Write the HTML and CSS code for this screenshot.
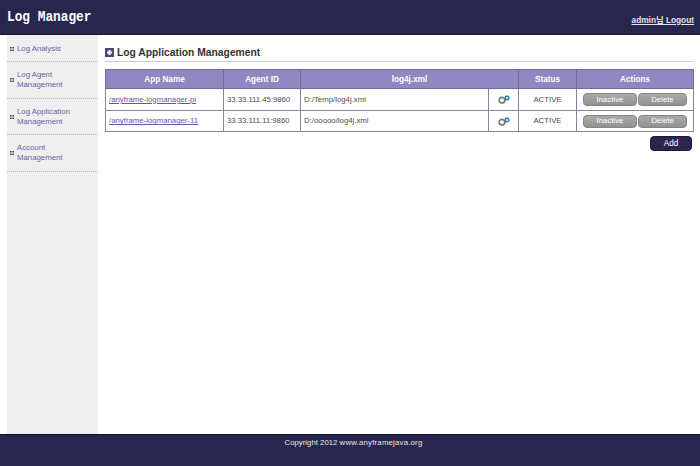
FILE: index.html
```html
<!DOCTYPE html>
<html lang="en">
<head>
<meta charset="utf-8">
<title>Log Manager</title>
<link rel="stylesheet" href="styles.css">
</head>
<body>
<svg class="defs" width="0" height="0">
  <symbol id="dots" viewBox="0 0 4 4"><path d="M0 0h1.6v1.6H0zM2.4 0H4v1.6H2.4zM0 2.4h1.6V4H0zM2.4 2.4H4V4H2.4z" fill="#454168"/></symbol>
  <symbol id="gears" viewBox="0 0 12 9"><circle cx="4" cy="5.2" r="2.7" fill="none" stroke="#777" stroke-width="1.6"/><circle cx="4" cy="5.2" r="3.6" fill="none" stroke="#888" stroke-width=".7" stroke-dasharray="1.2 1.6"/><circle cx="9" cy="3" r="1.7" fill="none" stroke="#2587ab" stroke-width="1.5"/><circle cx="9" cy="3" r="2.5" fill="none" stroke="#3b8dae" stroke-width=".5" stroke-dasharray="1 1"/></symbol>
</svg>
<header class="header">
  <h1 class="brand">Log Manager</h1>
  <a class="logout">admin님 Logout</a>
</header>
<div class="body">
  <nav class="sidebar">
    <a class="item first"><svg class="dots"><use href="#dots"/></svg><span>Log Analysis</span></a>
    <a class="item"><svg class="dots"><use href="#dots"/></svg><span>Log Agent<br>Management</span></a>
    <a class="item"><svg class="dots"><use href="#dots"/></svg><span>Log Application<br>Management</span></a>
    <a class="item"><svg class="dots"><use href="#dots"/></svg><span>Account<br>Management</span></a>
  </nav>
  <main class="main">
    <div class="title">
      <svg class="plus" viewBox="0 0 9 9"><path d="M0 0h9v9H0z" fill="#4c4878"/><path d="M3.5 2h2v1.5H7v2H5.5V7h-2V5.5H2v-2h1.5z" fill="#fff"/></svg>
      <h2>Log Application Management</h2>
    </div>
    <table class="apps">
      <colgroup><col class="c-name"><col class="c-agent"><col class="c-xml"><col class="c-gear"><col class="c-status"><col class="c-act"></colgroup>
      <tr><th>App Name</th><th>Agent ID</th><th class="xml" colspan="2">log4j.xml</th><th>Status</th><th>Actions</th></tr>
      <tr><td><a class="link">/anyframe-logmanager-pi</a></td><td class="agent">33.33.111.45:9860</td><td>D:/Temp/log4j.xml</td><td class="center"><svg class="gears"><use href="#gears"/></svg></td><td class="center status">ACTIVE</td><td><div class="actions"><button class="btn">Inactive</button><button class="btn small">Delete</button></div></td></tr>
      <tr><td><a class="link">/anyframe-logmanager-11</a></td><td class="agent">33.33.111.11:9860</td><td>D:/ooooo/log4j.xml</td><td class="center"><svg class="gears"><use href="#gears"/></svg></td><td class="center status">ACTIVE</td><td><div class="actions"><button class="btn">Inactive</button><button class="btn small">Delete</button></div></td></tr>
    </table>
    <button class="add">Add</button>
  </main>
</div>
<footer class="footer">Copyright 2012 <span class="site">www.anyframejava.org</span></footer>
</body>
</html>
```
FILE: styles.css
```css
* { box-sizing: border-box; }
body {
  margin: 0;
  height: 466px;
  display: flex;
  flex-direction: column;
  overflow: hidden;
  background: #fff;
  font: 7.8px/10px "Liberation Sans", Arial, sans-serif;
  color: #4d4d4d;
}
.defs { position: absolute; }
.header {
  height: 35px;
  flex: none;
  display: flex;
  justify-content: space-between;
  padding: 0 6px 0 7px;
  background: #28264c;
  border-bottom: 1px solid #17152f;
}
.brand {
  margin: 9px 0 0;
  font: bold 12.8px/16px "Liberation Mono", monospace;
  color: #fff;
  transform: scaleY(1.18);
  height: 16px;
}
.logout {
  margin-top: 15px;
  font: bold 8.3px/10px "Liberation Sans", "Noto Sans CJK KR", sans-serif;
  color: #e4e3ef;
  text-decoration: underline;
}
.body { flex: 1; display: flex; padding-left: 7px; }
.sidebar { width: 91px; background: #efefef; }
.item {
  height: 36.5px;
  display: flex;
  align-items: center;
  gap: 3px;
  padding: 1px 0 0 3px;
  border-bottom: 1px dotted #bbb;
  color: #6a60a5;
}
.item.first { height: 27px; }
.dots { width: 4px; height: 4px; }
.main { width: 588px; margin-left: 7px; display: flex; flex-direction: column; }
.title {
  height: 27px;
  display: flex;
  align-items: center;
  gap: 3px;
  padding-top: 8px;
  border-bottom: 1px solid #ccc;
}
.plus { width: 9px; height: 9px; }
h2 { margin: 1px 0 0; font-size: 10.3px; line-height: 12px; color: #333; }
.apps {
  width: 589px;
  margin-top: 7px;
  table-layout: fixed;
  border-collapse: collapse;
}
.c-name { width: 118px; }
.c-agent { width: 77px; }
.c-xml { width: 188px; }
.c-gear { width: 30px; }
.c-status { width: 58px; }
.c-act { width: 117px; }
th, td { border: 1px solid #8681a0; padding: 1px 3px 0; text-align: left; white-space: nowrap; }
th {
  height: 19px;
  background: #9088c0;
  border-color: #716b9b;
  color: #fff;
  text-align: center;
  font-size: 8.2px;
}
td { height: 21.5px; }
.center { text-align: center; }
.agent { letter-spacing: -.05px; }
.link { color: #6158a0; text-decoration: underline; }
.gears { display: block; width: 12px; height: 9px; margin: 0 auto; }
.actions { display: flex; gap: 1px; padding-left: 3px; }
button { font: 7.8px/10px "Liberation Sans", Arial, sans-serif; padding: 0; color: #fff; }
.btn {
  width: 54px;
  height: 13px;
  border: 1px solid #858585;
  border-radius: 4px;
  background: linear-gradient(#aaa, #929292);
}
.btn.small { width: 49px; }
.add {
  width: 42px;
  height: 15px;
  margin: 4px 1px 0 0;
  align-self: flex-end;
  border: 1px solid #1c1a3c;
  border-radius: 4px;
  background: #28264c;
  font-size: 8.2px;
}
.footer {
  height: 32px;
  flex: none;
  padding: 3px 0 0 7px;
  border-top: 1px solid #111028;
  background: #28264c;
  color: #e6e6ee;
  text-align: center;
}
.site { letter-spacing: .2px; }
```
